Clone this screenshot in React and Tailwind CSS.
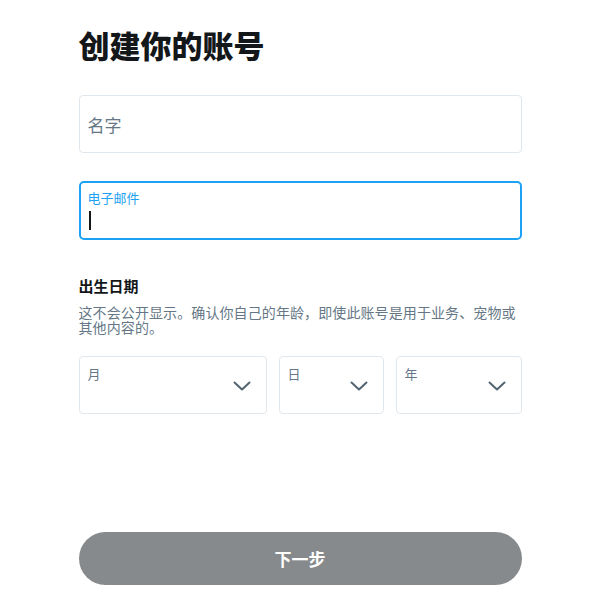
import React from 'react';

const font = { fontFamily: '"Noto Sans CJK SC", "Noto Sans", sans-serif' };

const Chevron = () => (
  <svg width="18" height="10" viewBox="0 0 18 10" fill="none" className="shrink-0">
    <path d="M1.5 1.5 L9 8.5 L16.5 1.5" stroke="#536471" strokeWidth="2" strokeLinecap="round" strokeLinejoin="round" />
  </svg>
);

const SelectBox = ({ label, className }) => (
  <div className={`relative h-[58px] rounded-[4px] border border-[#e1e8ed] ${className}`}>
    <span className="absolute left-[8px] top-[8px] text-[13px] leading-[18px] text-[#657786]">{label}</span>
    <div className="absolute right-[15px] top-[24px]">
      <Chevron />
    </div>
  </div>
);

export default function App() {
  return (
    <div className="w-[600px] h-[604px] bg-white overflow-hidden" style={font}>
      <div className="w-[443px] mx-auto pt-[26px] flex flex-col">
        <h1 className="text-[31px] leading-[37px] font-black text-[#14171a]">创建你的账号</h1>

        <div className="mt-[32px] h-[58px] rounded-[4px] border border-[#e1e8ed] flex items-center px-[8px] pt-[2px]">
          <span className="text-[17px] text-[#657786]">名字</span>
        </div>

        <div className="mt-[28px] h-[59px] rounded-[5px] border-2 border-[#1da1f2] px-[7px] pt-[6px] flex flex-col">
          <span className="text-[13px] leading-[18px] text-[#1da1f2]">电子邮件</span>
          <div className="mt-[4px] ml-[1px] w-[2px] h-[19px] bg-[#14171a]" />
        </div>

        <h2 className="mt-[36px] text-[15px] leading-[20px] font-bold text-[#14171a]">出生日期</h2>
        <p className="mt-[9px] text-[14px] leading-[15px] tracking-[0.1px] text-[#657786]">
          这不会公开显示。确认你自己的年龄，即使此账号是用于业务、宠物或其他内容的。
        </p>

        <div className="mt-[21px] flex gap-[12px]">
          <SelectBox label="月" className="w-[188px]" />
          <SelectBox label="日" className="w-[105px]" />
          <SelectBox label="年" className="flex-1" />
        </div>

        <button className="mt-[118px] h-[53px] w-full rounded-full bg-[#878a8c] text-white text-[17px] font-bold">
          下一步
        </button>
      </div>
    </div>
  );
}
